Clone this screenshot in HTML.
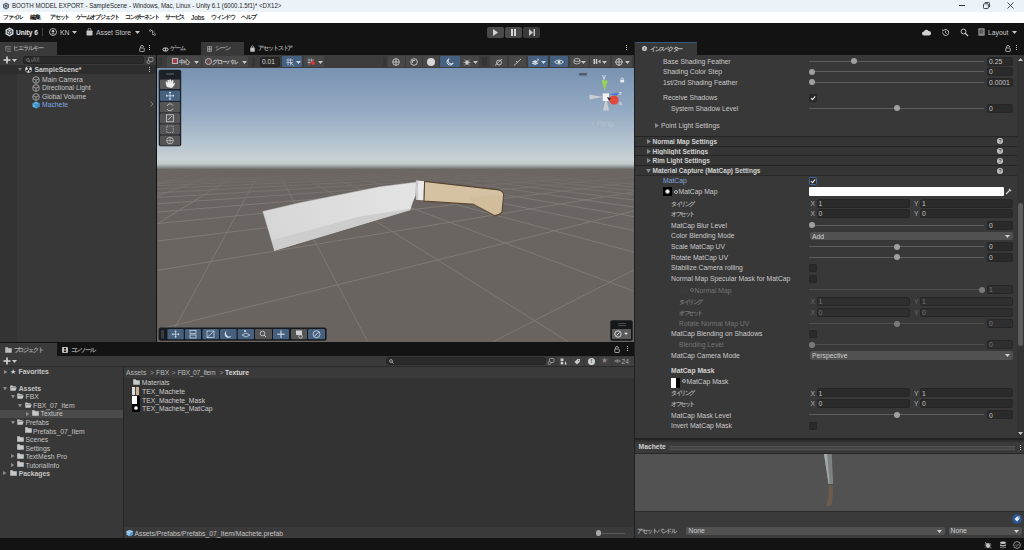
<!DOCTYPE html>
<html><head><meta charset="utf-8">
<style>
*{margin:0;padding:0;box-sizing:border-box}
html,body{width:1024px;height:550px;overflow:hidden;background:#131313}
body{position:relative;font-family:"Liberation Sans",sans-serif;font-size:6.8px;color:#cacaca}
.a{position:absolute}
.t{position:absolute;white-space:nowrap;line-height:10px}
.b{font-weight:bold}
.fld{position:absolute;background:#2a2a2a;border:1px solid #232323;border-radius:2px}
.trk{position:absolute;height:1px;background:#5e5e5e}
.knob{position:absolute;width:6px;height:6px;border-radius:50%;background:#999}
.chk{position:absolute;width:8px;height:8px;background:#2a2a2a;border:1px solid #222;border-radius:1px}
.dd{position:absolute;background:#515151;border-radius:2px}
.jp{font-size:5.9px;font-weight:bold;letter-spacing:-1.2px;color:#1a1a1a}
.jpd{position:absolute;white-space:nowrap;line-height:10px;font-size:5.8px;font-weight:bold;letter-spacing:-1.1px;color:#a0a0a0}
.btn{background:#474747;border-radius:1px}
.btnb{background:#46607f;border-radius:1px}
</style></head><body>
<!-- title bar -->
<div class="a" style="left:0;top:0;width:1024px;height:12px;background:#ebf2f8"></div>
<!-- menu bar -->
<div class="a" style="left:0;top:12px;width:1024px;height:10.5px;background:#fff"></div>
<div class="a" style="left:0;top:22.5px;width:1024px;height:1px;background:#060606"></div>
<!-- main toolbar -->
<div class="a" style="left:0;top:23px;width:1024px;height:19px;background:#131313"></div>

<!-- title bar content -->
<svg class="a" style="left:2px;top:2px" width="8" height="8" viewBox="0 0 16 16"><path d="M8 1 L14 4.5 V11.5 L8 15 L2 11.5 V4.5Z" fill="#5a6470"/><path d="M8 4 L11 5.8 V9.8 L8 11.6 L5 9.8 V5.8Z" fill="none" stroke="#dfe5ec" stroke-width="1.2"/></svg>
<div class="t" style="left:12.3px;top:1px;font-size:7.2px;color:#1e1e1e;transform:scaleX(0.852);transform-origin:0 0">BOOTH MODEL EXPORT - SampleScene - Windows, Mac, Linux - Unity 6.1 (6000.1.5f1)* &lt;DX12&gt;</div>
<div class="a" style="left:959px;top:5px;width:6px;height:1px;background:#333"></div>
<svg class="a" style="left:983px;top:2px" width="7" height="7"><rect x="0.5" y="1.8" width="4.8" height="4.7" rx="0.8" fill="none" stroke="#333" stroke-width="0.9"/><path d="M1.8 1.2 Q1.8 0.5 2.6 0.5 H5.7 Q6.5 0.5 6.5 1.3 V4.4 Q6.5 5.2 5.8 5.2" fill="none" stroke="#333" stroke-width="0.9"/></svg>
<svg class="a" style="left:1007px;top:2px" width="7" height="7"><path d="M0.5 0.5 L6.5 6.5 M6.5 0.5 L0.5 6.5" stroke="#333" stroke-width="0.9"/></svg>
<!-- menu -->
<div class="t jp" style="left:3px;top:12px">ファイル</div>
<div class="t jp" style="left:30px;top:12px">編集</div>
<div class="t jp" style="left:50px;top:12px">アセット</div>
<div class="t jp" style="left:76px;top:12px">ゲームオブジェクト</div>
<div class="t jp" style="left:125px;top:12px">コンポーネント</div>
<div class="t jp" style="left:165px;top:12px">サービス</div>
<div class="t" style="left:191px;top:12.5px;color:#1a1a1a;font-size:6.3px;-webkit-text-stroke:0.15px #1a1a1a">Jobs</div>
<div class="t jp" style="left:211px;top:12px">ウィンドウ</div>
<div class="t jp" style="left:241px;top:12px">ヘルプ</div>
<!-- toolbar -->
<svg class="a" style="left:5px;top:27px" width="9" height="10" viewBox="0 0 18 20"><path d="M9 1 L17 5.5 V14.5 L9 19 L1 14.5 V5.5Z" fill="#d8dde3"/><path d="M9 5 L13.5 7.5 V12.5 L9 15 L4.5 12.5 V7.5Z M9 10 V15 M4.5 7.5 L9 10 L13.5 7.5" fill="none" stroke="#191919" stroke-width="1.4"/></svg>
<div class="t b" style="left:16px;top:27.8px;font-size:6.6px;color:#e8e8e8">Unity 6</div>
<div class="a" style="left:42px;top:28px;width:1px;height:8px;background:#444"></div>
<svg class="a" style="left:49px;top:28px" width="8" height="8" viewBox="0 0 16 16"><circle cx="8" cy="8" r="7" fill="none" stroke="#c8c8c8" stroke-width="1.6"/><circle cx="8" cy="6.5" r="2.5" fill="#c8c8c8"/><path d="M3.5 12.5 Q8 8.5 12.5 12.5" fill="#c8c8c8"/></svg>
<div class="t" style="left:60px;top:27.8px;font-size:6.8px;color:#c8c8c8">KN</div>
<svg class="a" style="left:72px;top:31px" width="5" height="3"><path d="M0 0 H5 L2.5 3Z" fill="#c8c8c8"/></svg>
<svg class="a" style="left:86px;top:28px" width="7" height="8" viewBox="0 0 14 16"><path d="M4 5 V3.5 A3 3 0 0 1 10 3.5 V5" fill="none" stroke="#c8c8c8" stroke-width="1.5"/><rect x="1" y="5" width="12" height="10" rx="1.5" fill="#c8c8c8"/></svg>
<div class="t" style="left:96px;top:27.8px;font-size:6.8px;color:#c8c8c8">Asset Store</div>
<svg class="a" style="left:135px;top:31px" width="5" height="3"><path d="M0 0 H5 L2.5 3Z" fill="#c8c8c8"/></svg>
<svg class="a" style="left:149px;top:29px" width="7" height="7" viewBox="0 0 14 14"><circle cx="2.5" cy="3" r="1.8" fill="none" stroke="#c8c8c8" stroke-width="1.2"/><circle cx="11.5" cy="11" r="1.8" fill="none" stroke="#c8c8c8" stroke-width="1.2"/><path d="M4.3 3 H7 V11 H9.7 M7 6 H11" fill="none" stroke="#c8c8c8" stroke-width="1.2"/></svg>
<!-- play controls -->
<div class="a" style="left:487px;top:27px;width:17px;height:11px;background:#4a4a4a;border-radius:2px"></div>
<div class="a" style="left:505px;top:27px;width:17px;height:11px;background:#4a4a4a;border-radius:2px"></div>
<div class="a" style="left:523px;top:27px;width:17px;height:11px;background:#3a3a3a;border-radius:2px"></div>
<svg class="a" style="left:493px;top:29px" width="5" height="7"><path d="M0 0 L5 3.5 L0 7Z" fill="#d2d2d2"/></svg>
<div class="a" style="left:511px;top:29px;width:2px;height:7px;background:#d2d2d2"></div>
<div class="a" style="left:514px;top:29px;width:2px;height:7px;background:#d2d2d2"></div>
<svg class="a" style="left:529px;top:29px" width="6" height="7"><path d="M0 0 L4 3.5 L0 7Z" fill="#c8c8c8"/><rect x="4.5" y="0" width="1.5" height="7" fill="#c8c8c8"/></svg>
<!-- right toolbar icons -->
<svg class="a" style="left:922px;top:29px" width="9" height="7" viewBox="0 0 18 14"><path d="M4 13 A4 4 0 0 1 4 5 A5 5 0 0 1 13 4 A4.5 4.5 0 0 1 14 13Z" fill="#d0d0d0"/></svg>
<svg class="a" style="left:941px;top:28px" width="9" height="9" viewBox="0 0 18 18"><path d="M3.5 9 A6 6 0 1 0 5.2 4.8" fill="none" stroke="#c8c8c8" stroke-width="1.8"/><path d="M2 3 L5.8 4.2 L3.8 7.5Z" fill="#c8c8c8"/><path d="M9 5.5 V9.5 L11.5 11" fill="none" stroke="#c8c8c8" stroke-width="1.6"/></svg>
<svg class="a" style="left:960px;top:28px" width="9" height="9" viewBox="0 0 18 18"><circle cx="7" cy="7" r="4.8" fill="none" stroke="#c8c8c8" stroke-width="1.9"/><path d="M10.5 10.5 L16 16" stroke="#c8c8c8" stroke-width="2.4"/></svg>
<svg class="a" style="left:978px;top:28px" width="7" height="8" viewBox="0 0 14 16"><rect x="0.5" y="0.5" width="13" height="15" rx="1.5" fill="#8a8a8a"/><path d="M4 12 V4 H8 Q10 4 10 6 Q10 8 8 8 H4 M7 8 L10 12" fill="none" stroke="#2a2a2a" stroke-width="1.4"/></svg>
<div class="t" style="left:988px;top:27.8px;font-size:6.8px;color:#c8c8c8">Layout</div>
<svg class="a" style="left:1012px;top:31px" width="5" height="3"><path d="M0 0 H5 L2.5 3Z" fill="#c8c8c8"/></svg>

<!-- tab row -->
<div class="a" style="left:0;top:42px;width:57px;height:13px;background:#3a3a3a"></div>
<svg class="a" style="left:5px;top:45.5px" width="6" height="6" viewBox="0 0 12 12"><path d="M0.5 1.5 H11.5 M3.5 6 H11.5 M3.5 10.5 H11.5" fill="none" stroke="#a0a0a0" stroke-width="1.5"/><path d="M1.5 1.5 V10.5" stroke="#a0a0a0" stroke-width="1"/></svg>
<div class="t jpd" style="left:13px;top:43px">ヒエラルキー</div>
<svg class="a" style="left:139px;top:45px" width="6" height="7" viewBox="0 0 12 14"><path d="M3 6 V4 A3 3 0 0 1 9 4" fill="none" stroke="#c4c4c4" stroke-width="1.6"/><rect x="1.5" y="6" width="9" height="7" rx="1" fill="none" stroke="#c4c4c4" stroke-width="1.6"/></svg>
<div class="a" style="left:149px;top:45px;width:1px;height:1px;background:#c4c4c4;box-shadow:0 2px #c4c4c4,0 4px #c4c4c4"></div>
<!-- hierarchy panel -->
<div class="a" style="left:0;top:55px;width:156px;height:10px;background:#3a3a3a"></div>
<div class="a" style="left:0;top:65px;width:156px;height:277px;background:#383838"></div>
<div class="a" style="left:0;top:74px;width:17px;height:268px;background:#333333"></div>
<div class="a" style="left:0;top:65px;width:156px;height:9px;background:#2d2d2d"></div>
<svg class="a" style="left:3px;top:56px" width="8" height="8"><path d="M4 0.5 V7.5 M0.5 4 H7.5" stroke="#d8d8d8" stroke-width="1.6"/></svg>
<svg class="a" style="left:12px;top:59px" width="5" height="3"><path d="M0 0 H5 L2.5 3Z" fill="#c8c8c8"/></svg>
<div class="fld" style="left:23px;top:56px;width:121px;height:8px;border-radius:2px"></div>
<svg class="a" style="left:25.5px;top:57.5px" width="7" height="5" viewBox="0 0 14 10"><circle cx="4" cy="4" r="2.8" fill="none" stroke="#888" stroke-width="1.3"/><path d="M6 6 L8.5 8.5" stroke="#888" stroke-width="1.4"/><path d="M10 3 L12.5 5 L10 7" fill="none" stroke="#888" stroke-width="1.1"/></svg>
<div class="t" style="left:32px;top:55px;color:#6a6a6a">All</div>
<svg class="a" style="left:146px;top:57px" width="8" height="7" viewBox="0 0 16 14"><rect x="5" y="1" width="9" height="8" rx="1.5" fill="none" stroke="#bbb" stroke-width="1.3"/><circle cx="5" cy="10" r="3" fill="#3a3a3a" stroke="#bbb" stroke-width="1.3"/></svg>
<svg class="a" style="left:18px;top:68px" width="4" height="3"><path d="M0 0 H4 L2 3Z" fill="#777"/></svg>
<svg class="a" style="left:25px;top:66px" width="7" height="7" viewBox="0 0 14 14"><circle cx="7" cy="7" r="6.5" fill="#e6e6e6"/><path d="M7 7 L3 2.5 A6 6 0 0 1 11 2.5Z M7 7 L13 8 A6 6 0 0 1 9.5 12.5Z M7 7 L4.5 12.5 A6 6 0 0 1 1 8Z" fill="#2d2d2d"/><circle cx="7" cy="7" r="1.3" fill="#2d2d2d"/></svg>
<div class="t b" style="left:34.5px;top:64.5px">SampleScene*</div>
<div class="a" style="left:149px;top:67px;width:1px;height:1px;background:#bbb;box-shadow:0 2px #bbb,0 4px #bbb"></div>
<svg class="a" style="left:32px;top:75.5px" width="8" height="8" viewBox="0 0 16 16"><circle cx="8" cy="8" r="6.6" fill="none" stroke="#bdbdbd" stroke-width="1.5"/><path d="M2.5 5.5 L8 8.5 L13.5 5.5 M8 8.5 V14.5" fill="none" stroke="#bdbdbd" stroke-width="1.5"/></svg><div class="t" style="left:42px;top:74.5px;color:#c4c4c4">Main Camera</div><svg class="a" style="left:32px;top:84.0px" width="8" height="8" viewBox="0 0 16 16"><circle cx="8" cy="8" r="6.6" fill="none" stroke="#bdbdbd" stroke-width="1.5"/><path d="M2.5 5.5 L8 8.5 L13.5 5.5 M8 8.5 V14.5" fill="none" stroke="#bdbdbd" stroke-width="1.5"/></svg><div class="t" style="left:42px;top:83.0px;color:#c4c4c4">Directional Light</div><svg class="a" style="left:32px;top:92.5px" width="8" height="8" viewBox="0 0 16 16"><circle cx="8" cy="8" r="6.6" fill="none" stroke="#bdbdbd" stroke-width="1.5"/><path d="M2.5 5.5 L8 8.5 L13.5 5.5 M8 8.5 V14.5" fill="none" stroke="#bdbdbd" stroke-width="1.5"/></svg><div class="t" style="left:42px;top:91.5px;color:#c4c4c4">Global Volume</div><svg class="a" style="left:32px;top:101.0px" width="8" height="8" viewBox="0 0 16 16"><path d="M8 1 L15 4.5 V11.5 L8 15 L1 11.5 V4.5Z" fill="#5fb0e6"/><path d="M1 4.5 L8 8 L15 4.5 M8 8 V15" fill="none" stroke="#2f6f9c" stroke-width="1"/><path d="M8 8 L15 4.5 V11.5 L8 15Z" fill="#3d8ec2"/></svg><div class="t" style="left:42px;top:100.0px;color:#7fa6e0">Machete</div><svg class="a" style="left:150px;top:101px" width="4" height="6"><path d="M0.5 0.5 L3 3 L0.5 5.5" fill="none" stroke="#888" stroke-width="0.9"/></svg>
<svg class="a" style="left:162px;top:47px" width="7" height="5" viewBox="0 0 14 10"><path d="M1 5 A4 4 0 0 1 5 1 H9 A4 4 0 0 1 13 5 A4 4 0 0 1 9 9 H5 A4 4 0 0 1 1 5Z" fill="#c4c4c4"/><circle cx="4.5" cy="5" r="1.8" fill="#191919"/><circle cx="9.5" cy="5" r="1.8" fill="#191919"/></svg>
<div class="t jpd" style="left:170px;top:43px">ゲーム</div>
<div class="a" style="left:201px;top:42px;width:43px;height:13px;background:#383838"></div>
<svg class="a" style="left:206.5px;top:45.5px" width="5" height="6" viewBox="0 0 10 12"><path d="M1 1 H9 V11 H1Z M1 4.5 H9 M1 7.5 H9 M5 1 V11" fill="none" stroke="#b0b0b0" stroke-width="1.3"/></svg>
<div class="t jpd" style="left:215px;top:43px">シーン</div>
<svg class="a" style="left:250px;top:45px" width="5" height="7" viewBox="0 0 10 14"><path d="M3 5 V3.5 A2 2 0 0 1 7 3.5 V5" fill="none" stroke="#c4c4c4" stroke-width="1.4"/><rect x="0.5" y="5" width="9" height="8.5" rx="1" fill="#c4c4c4"/></svg>
<div class="t jpd" style="left:258px;top:43px">アセットストア</div>
<div class="a" style="left:626px;top:45px;width:1px;height:1px;background:#bbb;box-shadow:0 2px #bbb,0 4px #bbb"></div>
<!-- scene toolbar -->
<div class="a" style="left:157px;top:55px;width:477px;height:13px;background:#3c3c3c"></div>
<div class="a" style="left:159px;top:57px;width:3px;height:9px;background:#353535"></div>
<div class="a btn" style="left:167px;top:56px;width:34px;height:11px"></div>
<div class="a" style="left:172px;top:58px;width:6px;height:6px;background:#a34;border:1px solid #bbb"></div>
<div class="t jpd" style="left:179px;top:56.5px;color:#c4c4c4">中心</div>
<svg class="a" style="left:194px;top:60.5px" width="5" height="3"><path d="M0 0 H5 L2.5 3Z" fill="#c4c4c4"/></svg>
<div class="a btn" style="left:202px;top:56px;width:46px;height:11px"></div>
<div class="a" style="left:205px;top:57.5px;width:7px;height:7px;border-radius:50%;border:1px solid #bbb;background:#6a4a4a"></div>
<div class="t jpd" style="left:212px;top:56.5px;color:#c4c4c4">グローバル</div>
<svg class="a" style="left:242px;top:60.5px" width="5" height="3"><path d="M0 0 H5 L2.5 3Z" fill="#c4c4c4"/></svg>
<div class="a" style="left:252px;top:57px;width:3px;height:9px;background:#353535"></div>
<div class="fld" style="left:260px;top:56.5px;width:20px;height:10px"></div>
<div class="t" style="left:262px;top:56.5px;font-size:6.6px;color:#d0d0d0">0.01</div>
<div class="a btnb" style="left:282px;top:56px;width:20px;height:11px"></div>
<svg class="a" style="left:285.5px;top:57.5px" width="8" height="8" viewBox="0 0 16 16"><path d="M4 1 V15 M9 1 V15 M1 4 H14 M1 9 H14" stroke="#cfd8e4" stroke-width="1.4"/><path d="M9 9 L15 15" stroke="#cfd8e4" stroke-width="1.6"/></svg>
<svg class="a" style="left:296px;top:60.5px" width="5" height="3"><path d="M0 0 H5 L2.5 3Z" fill="#d0d8e2"/></svg>
<div class="a btn" style="left:304px;top:56px;width:20px;height:11px"></div>
<svg class="a" style="left:307px;top:57.5px" width="8" height="8" viewBox="0 0 16 16"><path d="M4 1 V13 M9 1 V8 M1 4 H14 M1 9 H8" stroke="#bbb" stroke-width="1.4"/></svg>
<div class="a" style="left:311px;top:61px;width:4px;height:4px;border-radius:50%;background:#d33"></div>
<svg class="a" style="left:318px;top:60.5px" width="5" height="3"><path d="M0 0 H5 L2.5 3Z" fill="#c4c4c4"/></svg>
<div class="a" style="left:383px;top:57px;width:3px;height:9px;background:#353535"></div>
<div class="a btn" style="left:388px;top:56px;width:17px;height:11px"></div>
<div class="a btn" style="left:405.5px;top:56px;width:16px;height:11px"></div>
<div class="a btn" style="left:422.5px;top:56px;width:16.5px;height:11px"></div>
<div class="a btnb" style="left:440px;top:56px;width:20px;height:11px"></div>
<svg class="a" style="left:392px;top:57.5px" width="8" height="8"><circle cx="4" cy="4" r="3.3" fill="none" stroke="#ccc" stroke-width="0.9"/><path d="M4 0.7 V7.3 M0.7 4 H7.3" stroke="#ccc" stroke-width="0.9"/></svg>
<svg class="a" style="left:409.5px;top:57.5px" width="8" height="8"><circle cx="4" cy="4" r="3.3" fill="none" stroke="#ccc" stroke-width="0.9"/><path d="M2.5 5 V2.5 H5" stroke="#ccc" stroke-width="0.9" fill="none"/></svg>
<div class="a" style="left:427px;top:57.5px;width:8px;height:8px;border-radius:50%;background:#d8d8d8"></div>
<svg class="a" style="left:446px;top:57.5px" width="8" height="8" viewBox="0 0 16 16"><path d="M6 1.5 A6.5 6.5 0 1 0 14.5 10 A5.5 5.5 0 0 1 6 1.5Z" fill="none" stroke="#eef2f6" stroke-width="1.8"/></svg>
<div class="a btn" style="left:460px;top:56px;width:19px;height:11px"></div>
<svg class="a" style="left:463px;top:57.5px" width="8" height="8" viewBox="0 0 16 16"><ellipse cx="8" cy="9" rx="3.5" ry="4.5" fill="#ccc"/><path d="M1 9 H15 M2.5 3 L5 5.5 M13.5 3 L11 5.5 M2.5 15 L5 12.5 M13.5 15 L11 12.5" stroke="#ccc" stroke-width="1.4"/></svg>
<svg class="a" style="left:473px;top:60.5px" width="5" height="3"><path d="M0 0 H5 L2.5 3Z" fill="#c4c4c4"/></svg>
<div class="a" style="left:482px;top:57px;width:5px;height:9px;background:#353535"></div>
<div class="a btn" style="left:490px;top:56px;width:17px;height:11px"></div>
<div class="a btn" style="left:508.5px;top:56px;width:17px;height:11px"></div>
<svg class="a" style="left:494px;top:57.5px" width="9" height="8"><circle cx="5" cy="4.5" r="2.5" fill="none" stroke="#ccc" stroke-width="0.9"/><path d="M1 7.5 L8 1" stroke="#ccc" stroke-width="0.9"/></svg>
<svg class="a" style="left:513px;top:57.5px" width="9" height="8"><path d="M1 7.5 L8 1 M3 3 L5 5" stroke="#ccc" stroke-width="0.9"/></svg>
<div class="a btnb" style="left:528px;top:56px;width:20px;height:11px"></div>
<svg class="a" style="left:531px;top:57.5px" width="9" height="8" viewBox="0 0 18 16"><path d="M1 10.5 L8 7 L15 10.5 L8 14Z" fill="#dde3ea"/><path d="M1 7.5 L8 4 L15 7.5 L8 11Z" fill="#dde3ea" stroke="#46607f" stroke-width="0.8"/><path d="M13 0.5 L16.5 3.5 L13 6.5Z" fill="#dde3ea"/></svg>
<svg class="a" style="left:541px;top:60.5px" width="5" height="3"><path d="M0 0 H5 L2.5 3Z" fill="#d0d8e2"/></svg>
<div class="a btnb" style="left:550px;top:56px;width:17.5px;height:11px"></div>
<svg class="a" style="left:554px;top:58.5px" width="10" height="6"><path d="M0.5 3 Q5 -1 9.5 3 Q5 7 0.5 3Z" fill="none" stroke="#dde3ea" stroke-width="0.9"/><circle cx="5" cy="3" r="1.4" fill="#dde3ea"/></svg>
<div class="a btn" style="left:569.5px;top:56px;width:19px;height:11px"></div>
<svg class="a" style="left:573px;top:58px" width="8" height="7" viewBox="0 0 16 14"><ellipse cx="8" cy="4" rx="6" ry="3" fill="none" stroke="#ccc" stroke-width="1.5"/><path d="M2 4 V10 Q8 14 14 10 V4" fill="none" stroke="#ccc" stroke-width="1.5"/></svg>
<svg class="a" style="left:581px;top:60.5px" width="5" height="3"><path d="M0 0 H5 L2.5 3Z" fill="#c4c4c4"/></svg>
<div class="a btn" style="left:590px;top:56px;width:20px;height:11px"></div>
<svg class="a" style="left:593px;top:58px" width="8" height="7" viewBox="0 0 16 14"><rect x="1" y="2" width="3" height="10" fill="#ccc"/><rect x="5.5" y="2" width="3" height="10" fill="#ccc"/><path d="M10 7 L15 3 V11Z" fill="#ccc"/></svg>
<svg class="a" style="left:602px;top:60.5px" width="5" height="3"><path d="M0 0 H5 L2.5 3Z" fill="#c4c4c4"/></svg>
<div class="a btn" style="left:612px;top:56px;width:20px;height:11px"></div>
<svg class="a" style="left:615px;top:57.5px" width="8" height="8"><circle cx="4" cy="4" r="3.2" fill="none" stroke="#ccc" stroke-width="0.9"/><path d="M4 0 V8 M0 4 H8" stroke="#ccc" stroke-width="0.9"/></svg>
<svg class="a" style="left:625px;top:60.5px" width="5" height="3"><path d="M0 0 H5 L2.5 3Z" fill="#c4c4c4"/></svg><!-- hierarchy -->

<!-- scene -->

<svg class="a" style="left:0;top:0" width="1024" height="550">
<defs>
<linearGradient id="sky" x1="0" y1="68" x2="0" y2="170" gradientUnits="userSpaceOnUse">
<stop offset="0.0000" stop-color="#7892b1"/><stop offset="0.4510" stop-color="#97acc4"/><stop offset="0.7549" stop-color="#b6c5d0"/><stop offset="0.8922" stop-color="#c9d2d4"/><stop offset="0.9412" stop-color="#c0c8ca"/><stop offset="0.9706" stop-color="#8d9395"/><stop offset="0.9951" stop-color="#6b6662"/><stop offset="1.0000" stop-color="#6b6662"/>
</linearGradient>
<linearGradient id="gnd" x1="0" y1="170" x2="0" y2="342" gradientUnits="userSpaceOnUse">
<stop offset="0" stop-color="#6a6562"/><stop offset="1" stop-color="#6a6460"/>
</linearGradient>
<linearGradient id="fade" x1="0" y1="170" x2="0" y2="200" gradientUnits="userSpaceOnUse">
<stop offset="0" stop-color="#6b6662" stop-opacity="1"/><stop offset="0.3" stop-color="#6b6662" stop-opacity="0.75"/><stop offset="1" stop-color="#6b6662" stop-opacity="0"/>
</linearGradient>
<linearGradient id="blade" x1="262" y1="230" x2="416" y2="190" gradientUnits="userSpaceOnUse">
<stop offset="0" stop-color="#d6d6d6"/><stop offset="1" stop-color="#e4e4e4"/>
</linearGradient>
<clipPath id="vp"><rect x="157" y="68" width="477" height="274"/></clipPath>
</defs>
<rect x="157" y="68" width="477" height="102" fill="url(#sky)"/>
<rect x="157" y="170" width="477" height="172" fill="url(#gnd)"/>
<g clip-path="url(#vp)" stroke="#817c77" stroke-width="0.9"><line x1="422.0" y1="171.0" x2="157.2" y2="181.0"/><line x1="455.9" y1="171.0" x2="157.3" y2="183.2"/><line x1="489.8" y1="171.0" x2="157.1" y2="185.8"/><line x1="523.6" y1="171.0" x2="157.3" y2="188.9"/><line x1="557.5" y1="171.0" x2="157.0" y2="192.8"/><line x1="591.3" y1="171.0" x2="157.2" y2="197.6"/><line x1="625.2" y1="171.0" x2="157.5" y2="203.8"/><line x1="171.7" y1="171.0" x2="157.1" y2="173.5"/><line x1="633.9" y1="173.1" x2="157.2" y2="212.1"/><line x1="189.4" y1="171.0" x2="157.0" y2="177.7"/><line x1="634.0" y1="176.8" x2="157.5" y2="223.6"/><line x1="207.1" y1="171.0" x2="157.0" y2="184.3"/><line x1="634.0" y1="182.4" x2="158.1" y2="241.0"/><line x1="224.7" y1="171.0" x2="157.0" y2="196.2"/><line x1="633.9" y1="191.9" x2="157.6" y2="270.4"/><line x1="242.4" y1="171.0" x2="157.3" y2="223.8"/><line x1="633.9" y1="211.0" x2="158.8" y2="329.3"/><line x1="260.1" y1="171.0" x2="167.4" y2="341.9"/><line x1="633.6" y1="270.1" x2="493.5" y2="341.5"/><line x1="277.7" y1="171.0" x2="367.5" y2="341.2"/><line x1="295.4" y1="171.0" x2="568.2" y2="341.7"/><line x1="313.0" y1="171.0" x2="633.1" y2="291.0"/><line x1="330.7" y1="171.0" x2="633.9" y2="252.1"/><line x1="348.3" y1="171.0" x2="633.3" y2="230.3"/><line x1="366.0" y1="171.0" x2="633.8" y2="216.6"/><line x1="383.6" y1="171.0" x2="633.4" y2="207.0"/><line x1="401.3" y1="171.0" x2="633.8" y2="200.0"/><line x1="419.0" y1="171.0" x2="633.5" y2="194.6"/><line x1="436.6" y1="171.0" x2="633.7" y2="190.4"/><line x1="454.3" y1="171.0" x2="633.9" y2="187.0"/><line x1="471.9" y1="171.0" x2="633.7" y2="184.2"/></g>
<rect x="157" y="170" width="477" height="30" fill="url(#fade)"/>
<path d="M262.6 211.2 L300 202.6 L360 190.6 L380 186.6 L416.5 182 L415.5 196 L412.7 202.7 L410.3 210 L274.3 250.7 Z" fill="url(#blade)" stroke="#8d8d8d" stroke-width="0.4"/>
<path d="M272.6 239.9 L358.9 216.7 L410.8 208.5 L410.3 210 L274.3 250.7Z" fill="#cdcdcd"/>
<path d="M416.3 180.6 L424.6 181.2 Q423.4 190 423.8 200.2 L416.5 200 Q414.6 190 416.3 180.6Z" fill="#ebebeb"/><path d="M416.3 180.6 L418.3 180.8 Q417 190 418.3 200 L416.5 200 Q414.6 190 416.3 180.6Z" fill="#c9c9c9"/>
<path d="M424.6 181.4 L498.8 189.9 Q503.6 191.5 503.6 194.7 L502 211.9 Q500 215 494.5 215.6 L474.1 204.4 L424 201.1 Z" fill="#d4c2a2" stroke="#5a4632" stroke-width="1.1" stroke-linejoin="round"/>
<path d="M470 197 L501 195 L501 211 L494.5 215 L474.1 204.4Z" fill="#cdb893" opacity="0.5"/>
<rect x="579" y="73" width="8" height="2.5" rx="1" fill="#4b5b6c"/>
<text x="602.3" y="79.3" font-family="Liberation Sans" font-size="6.8" fill="#eef3f8">y</text>
<path d="M601.5 80.6 L607.8 80.6 L604.6 91Z" fill="#95d24f"/>
<path d="M589.5 94.5 L603 97 L589.5 99.5Z" fill="#c9ccd1"/>
<path d="M603 110.6 L609 110.6 L606 97Z" fill="#c9ccd1"/>
<rect x="602.7" y="93.4" width="6.4" height="7.6" fill="#f2f2f2"/>
<path d="M609 94.5 L618 92.5 L617 95.5Z" fill="#4a78d8"/>
<circle cx="614" cy="100" r="4.6" fill="#e1473c"/>
<path d="M607 97 L611 98 L609 101Z" fill="#3a2a2a"/>
<text x="619" y="95" font-family="Liberation Sans" font-size="5.5" fill="#eef2f6">z</text>
<text x="619" y="105" font-family="Liberation Sans" font-size="5.5" fill="#eef2f6">x</text>
<path d="M621 79.8 V79 A1.2 1.2 0 0 1 623.4 79 V79.8" fill="none" stroke="#e8eef4" stroke-width="0.7"/><rect x="620.3" y="79.8" width="3.8" height="2.6" fill="#e8eef4"/>
<text x="591" y="126" font-family="Liberation Sans" font-size="6.6" fill="#ffffff" fill-opacity="0.2">&lt; Persp</text>
<rect x="158.7" y="69.8" width="22.5" height="76.4" rx="2" fill="#1c2127"/>
<rect x="166" y="73" width="8" height="2" fill="#3c4550"/>
<rect x="160" y="79.4" width="20" height="9.5" rx="1" fill="#5a5a5a"/>
<rect x="160" y="90.4" width="20" height="10.7" rx="1" fill="#46607e"/>
<rect x="160" y="101.9" width="20" height="10.5" rx="1" fill="#555555"/>
<rect x="160" y="113.2" width="20" height="10.3" rx="1" fill="#555555"/>
<rect x="160" y="124.3" width="20" height="10.2" rx="1" fill="#555555"/>
<rect x="160" y="135.4" width="20" height="10.0" rx="1" fill="#555555"/>
<path d="M167 87 Q165 83 166 81 L167.5 83 L167.5 80 L169 80 L169 82.5 L169.5 79.5 L171 79.5 L171 82.5 L172 80 L173.5 80.5 L173 84 L174.5 82.5 L175 83.5 Q173 88 171 88Z" fill="#ececec"/>
<path d="M170 92 V99.5 M166.2 95.8 H173.8" stroke="#cfe0f2" stroke-width="0.8"/><path d="M170 91.5 L168.5 93 H171.5Z M170 100 L168.5 98.5 H171.5Z M165.7 95.8 L167.2 94.3 V97.3Z M174.3 95.8 L172.8 94.3 V97.3Z" fill="#cfe0f2"/>
<path d="M173 105.5 A3.3 3.3 0 0 0 167 106 M167 109 A3.3 3.3 0 0 0 173 108.5" fill="none" stroke="#d0d0d0" stroke-width="0.8"/>
<rect x="166.5" y="114.8" width="7" height="7" fill="none" stroke="#d0d0d0" stroke-width="0.8"/><path d="M168 120 L172 116" stroke="#d0d0d0" stroke-width="0.8"/>
<rect x="166.8" y="126" width="6.5" height="6.5" fill="none" stroke="#d0d0d0" stroke-width="0.7" stroke-dasharray="1.2 1"/>
<circle cx="170" cy="140.5" r="3.3" fill="none" stroke="#d0d0d0" stroke-width="0.7"/><path d="M166.7 140.5 H173.3 M170 137.2 V143.8" stroke="#d0d0d0" stroke-width="0.6"/>
<rect x="158.6" y="327.4" width="168" height="13.3" rx="2" fill="#171b20"/>
<rect x="161" y="330" width="3" height="8.5" fill="#3a3d40"/>
<rect x="167.4" y="329" width="16.4" height="10.3" rx="1" fill="#46607e"/>
<rect x="185" y="329" width="16.0" height="10.3" rx="1" fill="#46607e"/>
<rect x="202.5" y="329" width="16.5" height="10.3" rx="1" fill="#46607e"/>
<rect x="220" y="329" width="16.6" height="10.3" rx="1" fill="#46607e"/>
<rect x="237.8" y="329" width="16.2" height="10.3" rx="1" fill="#46607e"/>
<rect x="255" y="329" width="17.0" height="10.3" rx="1" fill="#555555"/>
<rect x="273" y="329" width="16.0" height="10.3" rx="1" fill="#46607e"/>
<rect x="291" y="329" width="16.0" height="10.3" rx="1" fill="#555555"/>
<rect x="308" y="329" width="17.0" height="10.3" rx="1" fill="#46607e"/>
<path d="M175.6 331.5 V337 M172.9 334.2 H178.3" stroke="#d6e2ee" stroke-width="0.7"/><path d="M175.6 330.3 L174.3 331.8 H176.9Z M175.6 338.1 L174.3 336.6 H176.9Z M171.7 334.2 L173.2 332.9 V335.5Z M179.5 334.2 L178 332.9 V335.5Z" fill="#d6e2ee"/>
<rect x="190" y="330.5" width="6" height="3" fill="none" stroke="#d6e2ee" stroke-width="0.7"/><rect x="190" y="335" width="6" height="3" fill="none" stroke="#d6e2ee" stroke-width="0.7"/>
<rect x="207" y="331" width="7" height="6.5" fill="none" stroke="#d6e2ee" stroke-width="0.7"/><path d="M207 337.5 L214 331" stroke="#d6e2ee" stroke-width="0.7"/>
<path d="M227 330.6 A3.7 3.7 0 1 0 231.8 335.4 A3.2 3.2 0 0 1 227 330.6Z" fill="#d6e2ee"/>
<path d="M242 335 L246 333 L250 335 L246 337Z" fill="none" stroke="#d6e2ee" stroke-width="0.7"/><circle cx="245" cy="331" r="1" fill="#d6e2ee"/>
<circle cx="262.5" cy="333.5" r="2.3" fill="none" stroke="#d0d0d0" stroke-width="0.8"/><path d="M264 335 L266 337" stroke="#d0d0d0" stroke-width="0.9"/>
<path d="M281 330.5 V338 M277.2 334.2 H284.8" stroke="#d6e2ee" stroke-width="1"/>
<rect x="296" y="330.5" width="6" height="4.5" fill="#d0d0d0"/><circle cx="300.5" cy="336.5" r="1.8" fill="none" stroke="#d0d0d0" stroke-width="0.8"/>
<circle cx="316.5" cy="334.2" r="3.5" fill="none" stroke="#d6e2ee" stroke-width="0.8"/><path d="M314.5 336.2 L318.5 332.2" stroke="#d6e2ee" stroke-width="1"/>
<rect x="610.3" y="320.2" width="22.4" height="20.6" rx="2" fill="#15181b"/>
<rect x="618" y="323.2" width="8" height="0.8" fill="#555"/><rect x="618" y="325.2" width="8" height="0.8" fill="#555"/>
<rect x="612" y="329" width="19" height="10" fill="#5a5a5a"/>
<circle cx="618" cy="334" r="3.2" fill="none" stroke="#e0e0e0" stroke-width="0.9"/><path d="M616.5 335.5 L619.5 332.5" stroke="#e0e0e0" stroke-width="0.9"/>
<path d="M624 332.8 H628 L626 335Z" fill="#e0e0e0"/>
</svg>
<!-- inspector -->
<div class="a" style="left:634px;top:42px;width:1px;height:496px;background:#202020"></div>
<div class="a" style="left:635px;top:42px;width:62px;height:13px;background:#383838"></div>
<div class="a" style="left:635px;top:42px;width:62px;height:1px;background:#36587c"></div>
<div class="a" style="left:642px;top:46px;width:5px;height:5px;border-radius:50%;background:#c8c8c8;font:bold 4px/5px 'Liberation Sans';color:#383838;text-align:center">i</div>
<div class="jpd" style="left:650px;top:44.2px;color:#c4c4c4;letter-spacing:-1.45px;font-size:6px">インスペクター</div>
<svg class="a" style="left:1005px;top:45px" width="6" height="7" viewBox="0 0 12 14"><path d="M3 6 V4 A3 3 0 0 1 9 4" fill="none" stroke="#c4c4c4" stroke-width="1.6"/><rect x="1.5" y="6" width="9" height="7" rx="1" fill="none" stroke="#c4c4c4" stroke-width="1.6"/></svg>
<div class="a" style="left:1016px;top:45px;width:1px;height:1px;background:#c4c4c4;box-shadow:0 2px #c4c4c4,0 4px #c4c4c4"></div>
<div class="a" style="left:635px;top:55px;width:389px;height:383px;background:#383838"></div>
<div class="a" style="left:1017px;top:55px;width:7px;height:383px;background:#333"></div>
<div class="a" style="left:1018px;top:203px;width:5px;height:143px;background:#5e5e5e;border-radius:3px"></div>
<svg class="a" style="left:1018px;top:58px" width="5" height="3"><path d="M0 3 H5 L2.5 0Z" fill="#c4c4c4"/></svg>
<svg class="a" style="left:1018px;top:432px" width="5" height="3"><path d="M0 0 H5 L2.5 3Z" fill="#c4c4c4"/></svg>
<div class="t" style="left:663px;top:56.5px;color:#cacaca;">Base Shading Feather</div>
<div class="a" style="left:809px;top:60.7px;width:175px;height:1px;background:#5e5e5e"></div>
<div class="a" style="left:851.3px;top:58.2px;width:6px;height:6px;border-radius:50%;background:#a0a0a0"></div>
<div class="a" style="left:987px;top:56.7px;width:26px;height:9px;background:#2a2a2a;border:1px solid #262626;border-radius:2px"></div>
<div class="t" style="left:989px;top:56.9px;color:#c4c4c4;">0.25</div>
<div class="t" style="left:663px;top:67.2px;color:#cacaca;">Shading Color Step</div>
<div class="a" style="left:809px;top:71.0px;width:175px;height:1px;background:#5e5e5e"></div>
<div class="a" style="left:809.0px;top:68.5px;width:6px;height:6px;border-radius:50%;background:#a0a0a0"></div>
<div class="a" style="left:987px;top:67.0px;width:26px;height:9px;background:#2a2a2a;border:1px solid #262626;border-radius:2px"></div>
<div class="t" style="left:989px;top:67.2px;color:#c4c4c4;">0</div>
<div class="t" style="left:663px;top:78.0px;color:#cacaca;">1st/2nd Shading Feather</div>
<div class="a" style="left:809px;top:81.5px;width:175px;height:1px;background:#5e5e5e"></div>
<div class="a" style="left:809.0px;top:79.0px;width:6px;height:6px;border-radius:50%;background:#a0a0a0"></div>
<div class="a" style="left:987px;top:77.5px;width:26px;height:9px;background:#2a2a2a;border:1px solid #262626;border-radius:2px"></div>
<div class="t" style="left:989px;top:77.7px;color:#c4c4c4;">0.0001</div>
<div class="t" style="left:663px;top:93.0px;color:#cacaca;">Receive Shadows</div>
<div class="a" style="left:809px;top:93.5px;width:8px;height:8px;background:#2a2a2a;border:1px solid #262626;border-radius:1.5px"></div>
<svg class="a" style="left:810px;top:94.5px" width="6" height="6"><path d="M1 3.2 L2.5 4.7 L5.2 1.3" fill="none" stroke="#e8e8e8" stroke-width="1.1"/></svg>
<div class="t" style="left:671px;top:103.9px;color:#cacaca;">System Shadow Level</div>
<div class="a" style="left:809px;top:107.5px;width:175px;height:1px;background:#5e5e5e"></div>
<div class="a" style="left:893.5px;top:105.0px;width:6px;height:6px;border-radius:50%;background:#a0a0a0"></div>
<div class="a" style="left:987px;top:103.5px;width:26px;height:9px;background:#2a2a2a;border:1px solid #262626;border-radius:2px"></div>
<div class="t" style="left:989px;top:103.7px;color:#c4c4c4;">0</div>
<svg class="a" style="left:655px;top:123px" width="4" height="5"><path d="M0 0 V5 L4 2.5Z" fill="#8a8a8a"/></svg>
<div class="t" style="left:661px;top:121.1px;color:#cacaca;">Point Light Settings</div>
<div class="a" style="left:635px;top:135.5px;width:382px;height:1px;background:#242424"></div>
<div class="a" style="left:635px;top:136.5px;width:382px;height:9px;background:#353535"></div>
<svg class="a" style="left:647px;top:138.5px" width="4" height="5"><path d="M0 0 V5 L4 2.5Z" fill="#8a8a8a"/></svg>
<div class="t" style="left:652.5px;top:136.7px;color:#d2d2d2;font-weight:bold;font-size:6.5px">Normal Map Settings</div>
<div class="a" style="left:997px;top:138.0px;width:6px;height:6px;border-radius:50%;background:#c4c4c4;color:#353535;font:bold 5px/6px 'Liberation Sans';text-align:center">?</div>
<div class="a" style="left:635px;top:145.5px;width:382px;height:1px;background:#242424"></div>
<div class="a" style="left:635px;top:146.5px;width:382px;height:9px;background:#353535"></div>
<svg class="a" style="left:647px;top:148.5px" width="4" height="5"><path d="M0 0 V5 L4 2.5Z" fill="#8a8a8a"/></svg>
<div class="t" style="left:652.5px;top:146.7px;color:#d2d2d2;font-weight:bold;font-size:6.5px">Highlight Settings</div>
<div class="a" style="left:997px;top:148.0px;width:6px;height:6px;border-radius:50%;background:#c4c4c4;color:#353535;font:bold 5px/6px 'Liberation Sans';text-align:center">?</div>
<div class="a" style="left:635px;top:155px;width:382px;height:1px;background:#242424"></div>
<div class="a" style="left:635px;top:156px;width:382px;height:9px;background:#353535"></div>
<svg class="a" style="left:647px;top:158px" width="4" height="5"><path d="M0 0 V5 L4 2.5Z" fill="#8a8a8a"/></svg>
<div class="t" style="left:652.5px;top:156.2px;color:#d2d2d2;font-weight:bold;font-size:6.5px">Rim Light Settings</div>
<div class="a" style="left:997px;top:157.5px;width:6px;height:6px;border-radius:50%;background:#c4c4c4;color:#353535;font:bold 5px/6px 'Liberation Sans';text-align:center">?</div>
<div class="a" style="left:635px;top:165px;width:382px;height:1px;background:#242424"></div>
<div class="a" style="left:635px;top:166px;width:382px;height:9px;background:#353535"></div>
<svg class="a" style="left:646px;top:169px" width="5" height="4"><path d="M0 0 H5 L2.5 4Z" fill="#8a8a8a"/></svg>
<div class="t" style="left:652.5px;top:166.2px;color:#d2d2d2;font-weight:bold;font-size:6.5px">Material Capture (MatCap) Settings</div>
<div class="a" style="left:997px;top:167.5px;width:6px;height:6px;border-radius:50%;background:#c4c4c4;color:#353535;font:bold 5px/6px 'Liberation Sans';text-align:center">?</div>
<div class="a" style="left:635px;top:175px;width:382px;height:1px;background:#2a2a2a"></div>
<div class="t" style="left:663px;top:176.4px;color:#7fa6dc;">MatCap</div>
<div class="a" style="left:809px;top:177.0px;width:8px;height:8px;background:#2a2a2a;border:1px solid #3f6fa6;border-radius:1.5px"></div>
<svg class="a" style="left:810px;top:178.0px" width="6" height="6"><path d="M1 3.2 L2.5 4.7 L5.2 1.3" fill="none" stroke="#e8e8e8" stroke-width="1.1"/></svg>
<div class="a" style="left:663px;top:187.3px;width:8.5px;height:8.7px;background:#000"></div>
<div class="a" style="left:664.5px;top:188.8px;width:5.5px;height:5.5px;border-radius:50%;background:radial-gradient(#fff 25%,#bbb 45%,#333 80%,#000)"></div>
<div class="a" style="left:674px;top:189.7px;width:4px;height:4px;border-radius:50%;border:0.8px solid #bbb"></div>
<div class="t" style="left:678.5px;top:187.3px;color:#cacaca;">MatCap Map</div>
<div class="a" style="left:809px;top:187.3px;width:195px;height:8.5px;background:#fdfdfd;border-radius:1px"></div>
<svg class="a" style="left:1005px;top:188px" width="7" height="7"><path d="M1 6 L5 2 M4 1 L6 3" stroke="#ccc" stroke-width="1.2"/></svg>
<div class="jpd" style="left:671px;top:198.5px;color:#a8a8a8;letter-spacing:-1.45px;font-size:6px">タイリング</div>
<div class="t" style="left:810.5px;top:198.7px;color:#b0b0b0;">X</div>
<div class="a" style="left:816.5px;top:198.5px;width:93px;height:9px;background:#2a2a2a;border:1px solid #262626;border-radius:2px"></div>
<div class="t" style="left:818.5px;top:198.7px;color:#c4c4c4;">1</div>
<div class="t" style="left:914px;top:198.7px;color:#b0b0b0;">Y</div>
<div class="a" style="left:920px;top:198.5px;width:93px;height:9px;background:#2a2a2a;border:1px solid #262626;border-radius:2px"></div>
<div class="t" style="left:922px;top:198.7px;color:#c4c4c4;">1</div>
<div class="jpd" style="left:671px;top:209.0px;color:#a8a8a8;letter-spacing:-1.45px;font-size:6px">オフセット</div>
<div class="t" style="left:810.5px;top:209.2px;color:#b0b0b0;">X</div>
<div class="a" style="left:816.5px;top:209.0px;width:93px;height:9px;background:#2a2a2a;border:1px solid #262626;border-radius:2px"></div>
<div class="t" style="left:818.5px;top:209.2px;color:#c4c4c4;">0</div>
<div class="t" style="left:914px;top:209.2px;color:#b0b0b0;">Y</div>
<div class="a" style="left:920px;top:209.0px;width:93px;height:9px;background:#2a2a2a;border:1px solid #262626;border-radius:2px"></div>
<div class="t" style="left:922px;top:209.2px;color:#c4c4c4;">0</div>
<div class="t" style="left:671px;top:220.7px;color:#cacaca;">MatCap Blur Level</div>
<div class="a" style="left:809px;top:224.5px;width:175px;height:1px;background:#5e5e5e"></div>
<div class="a" style="left:809.0px;top:222.0px;width:6px;height:6px;border-radius:50%;background:#a0a0a0"></div>
<div class="a" style="left:987px;top:220.5px;width:26px;height:9px;background:#2a2a2a;border:1px solid #262626;border-radius:2px"></div>
<div class="t" style="left:989px;top:220.7px;color:#c4c4c4;">0</div>
<div class="t" style="left:671px;top:231.4px;color:#cacaca;">Color Blending Mode</div>
<div class="a" style="left:810px;top:231.8px;width:203px;height:8.5px;background:#515151;border-radius:2px"></div>
<div class="t" style="left:812px;top:231.5px;color:#d0d0d0;">Add</div>
<svg class="a" style="left:1005px;top:234.8px" width="5" height="3"><path d="M0 0 H5 L2.5 3Z" fill="#d0d0d0"/></svg>
<div class="t" style="left:671px;top:242.1px;color:#cacaca;">Scale MatCap UV</div>
<div class="a" style="left:809px;top:246.0px;width:175px;height:1px;background:#5e5e5e"></div>
<div class="a" style="left:893.5px;top:243.5px;width:6px;height:6px;border-radius:50%;background:#a0a0a0"></div>
<div class="a" style="left:987px;top:242.0px;width:26px;height:9px;background:#2a2a2a;border:1px solid #262626;border-radius:2px"></div>
<div class="t" style="left:989px;top:242.2px;color:#c4c4c4;">0</div>
<div class="t" style="left:671px;top:252.7px;color:#cacaca;">Rotate MatCap UV</div>
<div class="a" style="left:809px;top:256.5px;width:175px;height:1px;background:#5e5e5e"></div>
<div class="a" style="left:893.5px;top:254.0px;width:6px;height:6px;border-radius:50%;background:#a0a0a0"></div>
<div class="a" style="left:987px;top:252.5px;width:26px;height:9px;background:#2a2a2a;border:1px solid #262626;border-radius:2px"></div>
<div class="t" style="left:989px;top:252.7px;color:#c4c4c4;">0</div>
<div class="t" style="left:671px;top:263.4px;color:#cacaca;">Stabilize Camera rolling</div>
<div class="a" style="left:809px;top:264.0px;width:8px;height:8px;background:#2a2a2a;border:1px solid #262626;border-radius:1.5px"></div>
<div class="t" style="left:671px;top:274.1px;color:#cacaca;">Normal Map Specular Mask for MatCap</div>
<div class="a" style="left:809px;top:274.7px;width:8px;height:8px;background:#2a2a2a;border:1px solid #262626;border-radius:1.5px"></div>
<div class="a" style="left:680px;top:286px;width:8px;height:8px;background:#3a3a3a"></div>
<div class="a" style="left:690px;top:287.9px;width:4px;height:4px;border-radius:50%;border:0.8px solid #666"></div>
<div class="t" style="left:694.5px;top:285.5px;color:#757575;">Normal Map</div>
<div class="a" style="left:809px;top:289.0px;width:175px;height:1px;background:#4e4e4e"></div>
<div class="a" style="left:978.5px;top:286.5px;width:6px;height:6px;border-radius:50%;background:#7a7a7a"></div>
<div class="a" style="left:987px;top:285.0px;width:26px;height:9px;background:#2f2f2f;border:1px solid #262626;border-radius:2px"></div>
<div class="t" style="left:989px;top:285.2px;color:#777;">1</div>
<div class="jpd" style="left:679px;top:296.6px;color:#757575;letter-spacing:-1.45px;font-size:6px">タイリング</div>
<div class="t" style="left:810.5px;top:296.9px;color:#6a6a6a;">X</div>
<div class="a" style="left:816.5px;top:296.7px;width:93px;height:9px;background:#2f2f2f;border:1px solid #262626;border-radius:2px"></div>
<div class="t" style="left:818.5px;top:296.9px;color:#777;">1</div>
<div class="t" style="left:914px;top:296.9px;color:#6a6a6a;">Y</div>
<div class="a" style="left:920px;top:296.7px;width:93px;height:9px;background:#2f2f2f;border:1px solid #262626;border-radius:2px"></div>
<div class="t" style="left:922px;top:296.9px;color:#777;">1</div>
<div class="jpd" style="left:679px;top:307.6px;color:#757575;letter-spacing:-1.45px;font-size:6px">オフセット</div>
<div class="t" style="left:810.5px;top:307.7px;color:#6a6a6a;">X</div>
<div class="a" style="left:816.5px;top:307.5px;width:93px;height:9px;background:#2f2f2f;border:1px solid #262626;border-radius:2px"></div>
<div class="t" style="left:818.5px;top:307.7px;color:#777;">0</div>
<div class="t" style="left:914px;top:307.7px;color:#6a6a6a;">Y</div>
<div class="a" style="left:920px;top:307.5px;width:93px;height:9px;background:#2f2f2f;border:1px solid #262626;border-radius:2px"></div>
<div class="t" style="left:922px;top:307.7px;color:#777;">0</div>
<div class="t" style="left:679px;top:319.0px;color:#757575;">Rotate Normal Map UV</div>
<div class="a" style="left:809px;top:323.0px;width:175px;height:1px;background:#4e4e4e"></div>
<div class="a" style="left:893.6px;top:320.5px;width:6px;height:6px;border-radius:50%;background:#7a7a7a"></div>
<div class="a" style="left:987px;top:319.0px;width:26px;height:9px;background:#2f2f2f;border:1px solid #262626;border-radius:2px"></div>
<div class="t" style="left:989px;top:319.2px;color:#777;">0</div>
<div class="t" style="left:671px;top:329.3px;color:#cacaca;">MatCap Blending on Shadows</div>
<div class="a" style="left:809px;top:330.0px;width:8px;height:8px;background:#2a2a2a;border:1px solid #262626;border-radius:1.5px"></div>
<div class="t" style="left:679px;top:340.3px;color:#757575;">Blending Level</div>
<div class="a" style="left:809px;top:344.2px;width:175px;height:1px;background:#4e4e4e"></div>
<div class="a" style="left:809.0px;top:341.7px;width:6px;height:6px;border-radius:50%;background:#7a7a7a"></div>
<div class="a" style="left:987px;top:340.2px;width:26px;height:9px;background:#2f2f2f;border:1px solid #262626;border-radius:2px"></div>
<div class="t" style="left:989px;top:340.4px;color:#777;">0</div>
<div class="t" style="left:671px;top:351.0px;color:#cacaca;">MatCap Camera Mode</div>
<div class="a" style="left:810px;top:351.4px;width:203px;height:8.5px;background:#515151;border-radius:2px"></div>
<div class="t" style="left:812px;top:351.1px;color:#d0d0d0;">Perspective</div>
<svg class="a" style="left:1005px;top:354.4px" width="5" height="3"><path d="M0 0 H5 L2.5 3Z" fill="#d0d0d0"/></svg>
<div class="t" style="left:671px;top:365.5px;color:#d2d2d2;font-weight:bold">MatCap Mask</div>
<div class="a" style="left:671px;top:377.5px;width:4.5px;height:10px;background:#fff"></div>
<div class="a" style="left:675.5px;top:377.5px;width:4.5px;height:10px;background:#000"></div>
<div class="a" style="left:682px;top:379.3px;width:4px;height:4px;border-radius:50%;border:0.8px solid #bbb"></div>
<div class="t" style="left:686.5px;top:376.9px;color:#cacaca;">MatCap Mask</div>
<div class="jpd" style="left:671px;top:388.4px;color:#a8a8a8;letter-spacing:-1.45px;font-size:6px">タイリング</div>
<div class="t" style="left:810.5px;top:388.5px;color:#b0b0b0;">X</div>
<div class="a" style="left:816.5px;top:388.3px;width:93px;height:9px;background:#2a2a2a;border:1px solid #262626;border-radius:2px"></div>
<div class="t" style="left:818.5px;top:388.5px;color:#c4c4c4;">1</div>
<div class="t" style="left:914px;top:388.5px;color:#b0b0b0;">Y</div>
<div class="a" style="left:920px;top:388.3px;width:93px;height:9px;background:#2a2a2a;border:1px solid #262626;border-radius:2px"></div>
<div class="t" style="left:922px;top:388.5px;color:#c4c4c4;">1</div>
<div class="jpd" style="left:671px;top:399.0px;color:#a8a8a8;letter-spacing:-1.45px;font-size:6px">オフセット</div>
<div class="t" style="left:810.5px;top:399.1px;color:#b0b0b0;">X</div>
<div class="a" style="left:816.5px;top:398.9px;width:93px;height:9px;background:#2a2a2a;border:1px solid #262626;border-radius:2px"></div>
<div class="t" style="left:818.5px;top:399.1px;color:#c4c4c4;">0</div>
<div class="t" style="left:914px;top:399.1px;color:#b0b0b0;">Y</div>
<div class="a" style="left:920px;top:398.9px;width:93px;height:9px;background:#2a2a2a;border:1px solid #262626;border-radius:2px"></div>
<div class="t" style="left:922px;top:399.1px;color:#c4c4c4;">0</div>
<div class="t" style="left:671px;top:410.5px;color:#cacaca;">MatCap Mask Level</div>
<div class="a" style="left:809px;top:414.3px;width:175px;height:1px;background:#5e5e5e"></div>
<div class="a" style="left:893.5px;top:411.8px;width:6px;height:6px;border-radius:50%;background:#a0a0a0"></div>
<div class="a" style="left:987px;top:410.3px;width:26px;height:9px;background:#2a2a2a;border:1px solid #262626;border-radius:2px"></div>
<div class="t" style="left:989px;top:410.5px;color:#c4c4c4;">0</div>
<div class="t" style="left:671px;top:421.1px;color:#cacaca;">Invert MatCap Mask</div>
<div class="a" style="left:809px;top:421.6px;width:8px;height:8px;background:#2a2a2a;border:1px solid #262626;border-radius:1.5px"></div>
<div class="a" style="left:635px;top:438px;width:389px;height:1.5px;background:#232323"></div>
<div class="a" style="left:635px;top:439.5px;width:389px;height:2.5px;background:#2f2f2f"></div>
<div class="a" style="left:635px;top:442px;width:389px;height:10.5px;background:#3a3a3a"></div>
<div class="t" style="left:638.5px;top:442.3px;font-weight:bold;color:#d0d0d0">Machete</div>
<div class="a" style="left:669px;top:446px;width:346px;height:3.5px;background:#444;border-top:1px solid #555;border-bottom:1px solid #555"></div>
<div class="a" style="left:1019.5px;top:445px;width:1px;height:1px;background:#c4c4c4;box-shadow:0 2px #c4c4c4,0 4px #c4c4c4"></div>
<div class="a" style="left:635px;top:452.5px;width:389px;height:1px;background:#262626"></div>
<div class="a" style="left:635px;top:453.5px;width:389px;height:57.5px;background:#525252"></div>
<svg class="a" style="left:820px;top:450px" width="20" height="62"><path d="M4 4 L11.7 4 L13.2 34 L8.6 34 Z" fill="#7d8283"/><path d="M4 4 L7 4 L9.6 34 L8.6 34Z" fill="#a4a9aa"/><path d="M8.6 35 L13.2 36 L12.3 52 Q11.5 56.5 6 56.5 L8.3 49Z" fill="#6e5c4a"/></svg>
<div class="a" style="left:635px;top:511px;width:389px;height:1px;background:#2a2a2a"></div>
<div class="a" style="left:635px;top:512px;width:389px;height:26px;background:#3a3a3a"></div>
<div class="a" style="left:1011.5px;top:513.8px;width:10px;height:10px;border-radius:50%;background:#2a5492"></div>
<svg class="a" style="left:1013.5px;top:515.5px" width="6" height="6" viewBox="0 0 12 12"><path d="M1 6 L6 1 H11 V6 L6 11Z" fill="#e6eef8"/><circle cx="8.5" cy="3.5" r="1" fill="#2a5492"/></svg>
<div class="jpd" style="left:637px;top:526.3px;color:#aaa">アセットバンドル</div>
<div class="a" style="left:686px;top:527.3px;width:259px;height:8px;background:#515151;border-radius:2px"></div>
<div class="t" style="left:688.5px;top:526.3px;color:#d0d0d0">None</div>
<svg class="a" style="left:937px;top:530px" width="5" height="3"><path d="M0 0 H5 L2.5 3Z" fill="#d0d0d0"/></svg>
<div class="a" style="left:948.5px;top:527.3px;width:73px;height:8px;background:#515151;border-radius:2px"></div>
<div class="t" style="left:950.5px;top:526.3px;color:#d0d0d0">None</div>
<svg class="a" style="left:1014px;top:530px" width="5" height="3"><path d="M0 0 H5 L2.5 3Z" fill="#d0d0d0"/></svg>
<div class="a" style="left:0;top:538px;width:1024px;height:12px;background:#131313"></div>
<svg class="a" style="left:984px;top:540.5px" width="8" height="8" viewBox="0 0 16 16"><ellipse cx="8" cy="9" rx="4" ry="5" fill="#c8c8c8"/><path d="M2 2 L14 15 M1 8 H4 M12 8 H15 M2 13 L4 11 M14 13 L12 11 M3 4 L5 6 M13 4 L11 6" stroke="#c8c8c8" stroke-width="1.3"/></svg>
<svg class="a" style="left:998.5px;top:540.5px" width="8" height="8" viewBox="0 0 16 16"><ellipse cx="8" cy="3.5" rx="6" ry="2.5" fill="#c8c8c8"/><path d="M2 6.5 Q8 10 14 6.5 V9 Q8 12.5 2 9Z M2 11.5 Q8 15 14 11.5 V13 Q8 16 2 13Z" fill="#c8c8c8"/></svg>
<svg class="a" style="left:1012.5px;top:540.5px" width="8" height="8" viewBox="0 0 16 16"><circle cx="8" cy="8" r="6.8" fill="none" stroke="#c8c8c8" stroke-width="1.4"/><path d="M4.8 8.2 L7 10.4 L11.3 5.8" fill="none" stroke="#c8c8c8" stroke-width="1.5"/></svg>
<!-- project -->
<div class="a" style="left:0;top:343px;width:57px;height:13px;background:#3a3a3a"></div>
<svg class="a" style="left:5px;top:347px" width="7" height="6" viewBox="0 0 14 12"><path d="M0.5 11.5 V0.5 H5.5 L7 2.5 H13.5 V11.5Z" fill="#bdbdbd"/></svg>
<div class="jpd" style="left:13.5px;top:345.2px;color:#a8a8a8">プロジェクト</div>
<div class="a" style="left:62px;top:346.5px;width:5.5px;height:6.5px;background:#bdbdbd;border-radius:1px"></div>
<div class="a" style="left:63.5px;top:348px;width:2.5px;height:0.8px;background:#191919;box-shadow:0 1.5px #191919,0 3px #191919"></div>
<div class="jpd" style="left:70.5px;top:345.2px;color:#a8a8a8">コンソール</div>
<svg class="a" style="left:614px;top:346px" width="6" height="7" viewBox="0 0 12 14"><path d="M3 6 V4 A3 3 0 0 1 9 4" fill="none" stroke="#c4c4c4" stroke-width="1.6"/><rect x="1.5" y="6" width="9" height="7" rx="1" fill="none" stroke="#c4c4c4" stroke-width="1.6"/></svg>
<div class="a" style="left:627px;top:346px;width:1px;height:1px;background:#c4c4c4;box-shadow:0 2px #c4c4c4,0 4px #c4c4c4"></div>
<div class="a" style="left:0;top:356px;width:634px;height:10px;background:#3a3a3a"></div>
<svg class="a" style="left:3px;top:357px" width="8" height="8"><path d="M4 0.5 V7.5 M0.5 4 H7.5" stroke="#d8d8d8" stroke-width="1.6"/></svg>
<svg class="a" style="left:12px;top:360px" width="5" height="3"><path d="M0 0 H5 L2.5 3Z" fill="#c8c8c8"/></svg>
<div class="a" style="left:386px;top:357.3px;width:160px;height:8px;background:#2a2a2a;border:1px solid #252525;border-radius:3px"></div>
<svg class="a" style="left:388.5px;top:359px" width="5" height="5"><circle cx="2" cy="2" r="1.4" fill="none" stroke="#aaa" stroke-width="0.9"/><path d="M3 3 L4.6 4.6" stroke="#aaa" stroke-width="0.9"/></svg>
<svg class="a" style="left:547px;top:357.5px" width="8" height="7" viewBox="0 0 16 14"><rect x="5" y="1" width="9" height="8" rx="1.5" fill="none" stroke="#bbb" stroke-width="1.3"/><circle cx="5" cy="10" r="3" fill="#3a3a3a" stroke="#bbb" stroke-width="1.3"/></svg>
<div class="a" style="left:557.5px;top:356.5px;width:12px;height:9px;background:#404040"></div>
<svg class="a" style="left:560px;top:357.5px" width="7" height="7" viewBox="0 0 14 14"><rect x="1" y="1" width="6" height="5" fill="#ccc"/><circle cx="4" cy="10" r="3" fill="#ccc"/><path d="M9 13 L11 6 L13.5 13Z" fill="#ccc"/></svg>
<div class="a" style="left:571px;top:356.5px;width:12px;height:9px;background:#404040"></div>
<svg class="a" style="left:573.5px;top:357.5px" width="7" height="7" viewBox="0 0 14 14"><path d="M1 8 L7 2 H12 V7 L6 13Z" fill="#ccc"/><circle cx="9.5" cy="4.5" r="1.2" fill="#404040"/></svg>
<div class="a" style="left:585px;top:356.5px;width:12px;height:9px;background:#404040"></div>
<div class="a" style="left:588px;top:357.5px;width:7px;height:7px;border-radius:50%;background:#d0d0d0;font:bold 5.5px/7px 'Liberation Sans';color:#404040;text-align:center">!</div>
<div class="a" style="left:599px;top:356.5px;width:12px;height:9px;background:#404040"></div>
<div class="t" style="left:601px;top:356px;font-size:8px;color:#888">&#9733;</div>
<div class="a" style="left:612.5px;top:356.5px;width:21px;height:9px;background:#404040"></div>
<svg class="a" style="left:614px;top:359px" width="7" height="4"><path d="M0.5 2 Q3.5 -0.5 6.5 2 Q3.5 4.5 0.5 2Z" fill="none" stroke="#888" stroke-width="0.8"/><circle cx="3.5" cy="2" r="0.9" fill="#888"/></svg>
<div class="t" style="left:621.5px;top:356.7px;color:#aaa;">24</div>
<div class="a" style="left:0;top:366px;width:634px;height:1px;background:#2a2a2a"></div>
<div class="a" style="left:0;top:367px;width:123px;height:171px;background:#383838"></div>
<div class="a" style="left:123px;top:367px;width:1px;height:171px;background:#262626"></div>
<div class="a" style="left:124px;top:367px;width:510px;height:11px;background:#3a3a3a"></div>
<div class="a" style="left:124px;top:378px;width:510px;height:149px;background:#333333"></div>
<div class="a" style="left:124px;top:527px;width:510px;height:11px;background:#3a3a3a"></div>
<div class="t" style="left:126px;top:368.2px;color:#b8b8b8;">Assets</div>
<div class="t" style="left:150px;top:368.2px;color:#999;">&gt;</div>
<div class="t" style="left:156px;top:368.2px;color:#b8b8b8;">FBX</div>
<div class="t" style="left:171.5px;top:368.2px;color:#999;">&gt;</div>
<div class="t" style="left:177.5px;top:368.2px;color:#b8b8b8;letter-spacing:-0.35px">FBX_07_Item</div>
<div class="t" style="left:219.5px;top:368.2px;color:#999;">&gt;</div>
<div class="t" style="left:225px;top:368.2px;color:#d8d8d8;font-weight:bold">Texture</div>
<svg class="a" style="left:133px;top:379.4px" width="7" height="6" viewBox="0 0 16 12" preserveAspectRatio="none"><path d="M0.5 11.5 V0.5 H6 L7.5 2.5 H15.5 V11.5Z" fill="#c8c8c8"/></svg>
<div class="t" style="left:141.8px;top:378.4px;color:#cacaca;">Materials</div>
<div class="a" style="left:132px;top:387px;width:3px;height:8px;background:#ddd"></div>
<div class="a" style="left:135px;top:387px;width:1px;height:8px;background:#444"></div>
<div class="a" style="left:136px;top:387px;width:3px;height:8px;background:#c9b48e"></div>
<div class="t" style="left:142px;top:387.0px;color:#cacaca;">TEX_Machete</div>
<div class="a" style="left:132px;top:395.5px;width:4.5px;height:8px;background:#fff"></div>
<div class="a" style="left:136.5px;top:395.5px;width:3.5px;height:8px;background:#000"></div>
<div class="t" style="left:142px;top:395.5px;color:#cacaca;">TEX_Machete_Mask</div>
<div class="a" style="left:132px;top:404px;width:8px;height:8px;background:#000"></div>
<div class="a" style="left:134.3px;top:406.3px;width:3.5px;height:3.5px;border-radius:50%;background:radial-gradient(#fff 35%,#777 75%,#000)"></div>
<div class="t" style="left:142px;top:404.0px;color:#cacaca;">TEX_Machete_MatCap</div>
<svg class="a" style="left:4px;top:369.6px" width="3.5" height="4"><path d="M0 0 V4 L3.5 2Z" fill="#8c8c8c"/></svg>
<div class="t" style="left:9.5px;top:366.6px;font-size:7px;color:#c8c8c8">&#9733;</div>
<div class="t" style="left:18.5px;top:367.3px;color:#c8c8c8;font-weight:bold">Favorites</div>
<div class="a" style="left:0;top:409.6px;width:123px;height:8.3px;background:#4a4a4a"></div>
<svg class="a" style="left:3px;top:386.9px" width="4" height="3.5"><path d="M0 0 H4 L2 3.5Z" fill="#8c8c8c"/></svg>
<svg class="a" style="left:9.5px;top:384.9px" width="7" height="6" viewBox="0 0 16 12" preserveAspectRatio="none"><path d="M0.5 11.5 V1 H5.5 L7 2.5 H13 V4.5 H3.5 Z" fill="#c8c8c8"/><path d="M0.5 11.5 L3.5 5 H15.5 L12.5 11.5Z" fill="#c8c8c8"/></svg>
<div class="t" style="left:18.7px;top:384.1px;color:#c4c4c4;font-weight:bold">Assets</div>
<svg class="a" style="left:10.5px;top:395.2px" width="4" height="3.5"><path d="M0 0 H4 L2 3.5Z" fill="#8c8c8c"/></svg>
<svg class="a" style="left:17px;top:393.2px" width="7" height="6" viewBox="0 0 16 12" preserveAspectRatio="none"><path d="M0.5 11.5 V1 H5.5 L7 2.5 H13 V4.5 H3.5 Z" fill="#c8c8c8"/><path d="M0.5 11.5 L3.5 5 H15.5 L12.5 11.5Z" fill="#c8c8c8"/></svg>
<div class="t" style="left:25.5px;top:392.4px;color:#c4c4c4;">FBX</div>
<svg class="a" style="left:18px;top:403.7px" width="4" height="3.5"><path d="M0 0 H4 L2 3.5Z" fill="#8c8c8c"/></svg>
<svg class="a" style="left:24.5px;top:401.7px" width="7" height="6" viewBox="0 0 16 12" preserveAspectRatio="none"><path d="M0.5 11.5 V1 H5.5 L7 2.5 H13 V4.5 H3.5 Z" fill="#c8c8c8"/><path d="M0.5 11.5 L3.5 5 H15.5 L12.5 11.5Z" fill="#c8c8c8"/></svg>
<div class="t" style="left:33px;top:400.9px;color:#c4c4c4;">FBX_07_Item</div>
<svg class="a" style="left:26px;top:411.7px" width="3.5" height="4"><path d="M0 0 V4 L3.5 2Z" fill="#8c8c8c"/></svg>
<svg class="a" style="left:31.5px;top:410.2px" width="7" height="6" viewBox="0 0 16 12" preserveAspectRatio="none"><path d="M0.5 11.5 V0.5 H6 L7.5 2.5 H15.5 V11.5Z" fill="#c8c8c8"/></svg>
<div class="t" style="left:40.5px;top:409.4px;color:#c4c4c4;">Texture</div>
<svg class="a" style="left:10.5px;top:420.7px" width="4" height="3.5"><path d="M0 0 H4 L2 3.5Z" fill="#8c8c8c"/></svg>
<svg class="a" style="left:17px;top:418.7px" width="7" height="6" viewBox="0 0 16 12" preserveAspectRatio="none"><path d="M0.5 11.5 V1 H5.5 L7 2.5 H13 V4.5 H3.5 Z" fill="#c8c8c8"/><path d="M0.5 11.5 L3.5 5 H15.5 L12.5 11.5Z" fill="#c8c8c8"/></svg>
<div class="t" style="left:25.5px;top:417.9px;color:#c4c4c4;">Prefabs</div>
<svg class="a" style="left:24.5px;top:427.3px" width="7" height="6" viewBox="0 0 16 12" preserveAspectRatio="none"><path d="M0.5 11.5 V0.5 H6 L7.5 2.5 H15.5 V11.5Z" fill="#c8c8c8"/></svg>
<div class="t" style="left:33px;top:426.5px;color:#c4c4c4;">Prefabs_07_Item</div>
<svg class="a" style="left:17px;top:435.8px" width="7" height="6" viewBox="0 0 16 12" preserveAspectRatio="none"><path d="M0.5 11.5 V0.5 H6 L7.5 2.5 H15.5 V11.5Z" fill="#c8c8c8"/></svg>
<div class="t" style="left:25.5px;top:435.0px;color:#c4c4c4;">Scenes</div>
<svg class="a" style="left:17px;top:444.3px" width="7" height="6" viewBox="0 0 16 12" preserveAspectRatio="none"><path d="M0.5 11.5 V0.5 H6 L7.5 2.5 H15.5 V11.5Z" fill="#c8c8c8"/></svg>
<div class="t" style="left:25.5px;top:443.5px;color:#c4c4c4;">Settings</div>
<svg class="a" style="left:10.5px;top:454.3px" width="3.5" height="4"><path d="M0 0 V4 L3.5 2Z" fill="#8c8c8c"/></svg>
<svg class="a" style="left:17px;top:452.8px" width="7" height="6" viewBox="0 0 16 12" preserveAspectRatio="none"><path d="M0.5 11.5 V0.5 H6 L7.5 2.5 H15.5 V11.5Z" fill="#c8c8c8"/></svg>
<div class="t" style="left:25.5px;top:452.0px;color:#c4c4c4;">TextMesh Pro</div>
<svg class="a" style="left:10.5px;top:462.8px" width="3.5" height="4"><path d="M0 0 V4 L3.5 2Z" fill="#8c8c8c"/></svg>
<svg class="a" style="left:17px;top:461.3px" width="7" height="6" viewBox="0 0 16 12" preserveAspectRatio="none"><path d="M0.5 11.5 V0.5 H6 L7.5 2.5 H15.5 V11.5Z" fill="#c8c8c8"/></svg>
<div class="t" style="left:25.5px;top:460.5px;color:#c4c4c4;">TutorialInfo</div>
<svg class="a" style="left:3px;top:471.4px" width="3.5" height="4"><path d="M0 0 V4 L3.5 2Z" fill="#8c8c8c"/></svg>
<svg class="a" style="left:9.5px;top:469.9px" width="7" height="6" viewBox="0 0 16 12" preserveAspectRatio="none"><path d="M0.5 11.5 V0.5 H6 L7.5 2.5 H15.5 V11.5Z" fill="#c8c8c8"/></svg>
<div class="t" style="left:18.7px;top:469.1px;color:#c4c4c4;font-weight:bold">Packages</div>
<svg class="a" style="left:126px;top:529px" width="7.5" height="8" viewBox="0 0 16 16"><path d="M8 1 L15 4.5 V11.5 L8 15 L1 11.5 V4.5Z" fill="#8fc3e8"/><path d="M8 8 L15 4.5 V11.5 L8 15Z" fill="#4f95c8"/><path d="M1 4.5 L8 8 L15 4.5" fill="none" stroke="#dfefff" stroke-width="0.8"/></svg>
<div class="t" style="left:134.5px;top:528.7px;color:#c4c4c4;">Assets/Prefabs/Prefabs_07_Item/Machete.prefab</div>
<div class="a" style="left:598px;top:532.5px;width:27px;height:1px;background:#5a5a5a"></div>
<div class="a" style="left:595.5px;top:530px;width:5.5px;height:5.5px;border-radius:50%;background:#aaa"></div>
</body></html>
